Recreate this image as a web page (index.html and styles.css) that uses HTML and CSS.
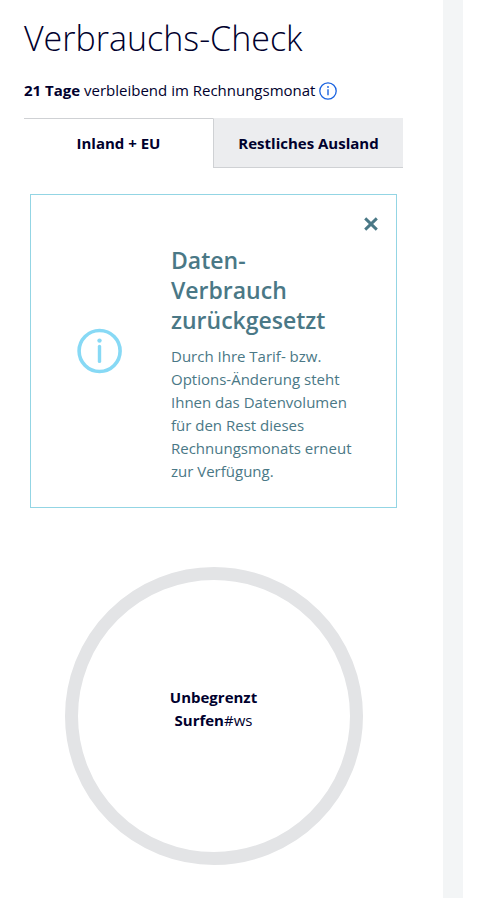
FILE: index.html
```html
<!DOCTYPE html>
<html lang="de">
<head>
<meta charset="UTF-8" />
<meta name="viewport" content="width=device-width, initial-scale=1" />
<title>Verbrauchs-Check</title>
<link rel="stylesheet" href="styles.css">
</head>
<body>

<div class="page">
  <main class="panel">
    <h1>Verbrauchs-Check</h1>

    <p class="remaining">
      <span><strong>21 Tage</strong> verbleibend im Rechnungsmonat</span>
      <button type="button" class="info-button" aria-label="Information">
        <svg width="18" height="18" viewBox="0 0 18 18" fill="none" stroke="currentColor">
          <circle cx="9" cy="9" r="8.2" stroke-width="1.3" />
          <path d="M9 7.3v6" stroke-width="1.4" />
          <circle cx="9" cy="5" r="0.9" fill="currentColor" stroke="none" />
        </svg>
      </button>
    </p>

    <div class="tabs" role="tablist">
      <button type="button" class="tab active" role="tab" aria-selected="true">Inland + EU</button>
      <button type="button" class="tab" role="tab" aria-selected="false">Restliches Ausland</button>
    </div>

    <section class="notice">
      <button type="button" class="close" aria-label="Schließen">
        <svg width="14" height="14" viewBox="0 0 14 14" fill="none" stroke="currentColor" stroke-width="2.9">
          <path d="M1.2 1.4l11.6 11.2M12.8 1.4L1.2 12.6" />
        </svg>
      </button>
      <div class="notice-body">
        <div class="notice-icon">
          <svg width="46" height="46" viewBox="0 0 46 46" fill="none" stroke="currentColor">
            <circle cx="22.6" cy="23" r="20.5" stroke-width="3.6" />
            <path d="M22.5 18.4v15" stroke-width="3.4" stroke-linecap="round" />
            <circle cx="22.5" cy="12.6" r="2.2" fill="currentColor" stroke="none" />
          </svg>
        </div>
        <div class="notice-text">
          <h2>Daten-<br>Verbrauch zurückgesetzt</h2>
          <p>Durch Ihre Tarif- bzw. Options-Änderung steht Ihnen das Datenvolumen für den Rest dieses Rechnungsmonats erneut zur Verfügung.</p>
        </div>
      </div>
    </section>

    <div class="usage">
      <p><strong>Unbegrenzt<br>Surfen</strong>#ws</p>
    </div>
  </main>
  <div class="divider"></div>
</div>

</body>
</html>
```
FILE: styles.css
```css
* {
  box-sizing: border-box;
}
body {
  margin: 0;
  font-family: "Open Sans", "Noto Sans", sans-serif;
  font-size: 15px;
  line-height: 23px;
  color: #00002d;
  background: #fff;
}
button {
  font: inherit;
  color: inherit;
  background: none;
  border: none;
  padding: 0;
  cursor: pointer;
}
strong {
  font-weight: 700;
}
svg {
  display: block;
}
.page {
  display: flex;
  min-height: 100vh;
  padding-right: 21px;
}
.panel {
  flex: 1;
  min-width: 0;
  padding: 14px 40px 32px 24px;
}
.divider {
  width: 20px;
  background: #f3f5f6;
}
h1 {
  margin: 0;
  font-size: 34px;
  line-height: 48px;
  font-weight: 300;
}
.remaining {
  display: flex;
  align-items: center;
  gap: 4px;
  margin: 17px 0 16px;
  white-space: nowrap;
}
.info-button {
  color: #1a63e0;
}

/* Tabs */
.tabs {
  display: flex;
}
.tab {
  flex: 1;
  height: 50px;
  font-weight: 700;
  background: #ecedef;
  border-top: 1px solid #ecedef;
  border-left: 1px solid #cfd1d4;
  border-bottom: 1px solid #cfd1d4;
}
.tab.active {
  background: #fff;
  border-left: none;
  border-top-color: #cfd1d4;
  border-bottom-color: #fff;
}

/* Notice box */
.notice {
  display: flex;
  flex-direction: column;
  margin: 26px 6px 0;
  padding: 22px 18px 24px 24px;
  border: 1px solid #93d5e4;
  color: #4a7886;
}
.close {
  align-self: flex-end;
}
.notice-body {
  display: flex;
  margin-top: 14px;
  padding-right: 18px;
}
.notice-icon {
  flex: 0 0 116px;
  display: flex;
  align-items: center;
  padding: 0 0 26px 22px;
  color: #87d9f5;
}
h2 {
  margin: 0 0 10px;
  font-size: 23px;
  line-height: 30px;
  font-weight: 600;
}
.notice-text p {
  margin: 0;
}

/* Usage ring */
.usage {
  display: flex;
  align-items: center;
  justify-content: center;
  width: 298px;
  height: 298px;
  margin: 59px auto 0;
  border: 13px solid #e3e4e6;
  border-radius: 50%;
  text-align: center;
}
.usage p {
  margin: 0 0 14px;
}
```
